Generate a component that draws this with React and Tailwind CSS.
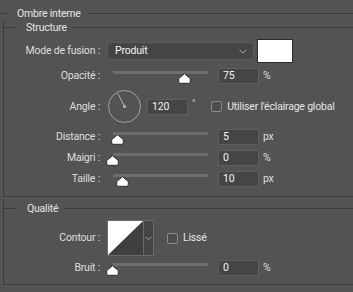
import React from 'react';

const LINE = 'bg-[#3a3a3a]';

const Header = ({ label, lead, padL, padR, className = '' }) => (
  <div className={`flex items-center h-[15px] ${className}`}>
    <div className={`h-px ${LINE} ${lead}`} />
    <span className={`${padL} ${padR} leading-[15px] text-[#e4e4e4] whitespace-nowrap`}>{label}</span>
    <div className={`h-px flex-1 ${LINE}`} />
  </div>
);

const Label = ({ children }) => (
  <div className="w-[96px] shrink-0 text-right text-[#dedede] whitespace-nowrap">{children}</div>
);

const Field = ({ value, w = 'w-[41px]' }) => (
  <div className={`${w} h-[16px] shrink-0 bg-[#454545] border border-[#5e5e5e] pl-[4px] text-[#f4f4f4] leading-[14px]`}>
    {value}
  </div>
);

const Thumb = () => (
  <svg width="13" height="11" viewBox="0 0 13 11" className="block">
    <path
      d="M6.5 0.7 L12.3 5.6 L12.3 8.8 Q12.3 10.3 10.8 10.3 L2.2 10.3 Q0.7 10.3 0.7 8.8 L0.7 5.6 Z"
      fill="#ffffff"
      stroke="#2b2b2b"
      strokeWidth="1"
    />
  </svg>
);

// thumb x is the pixel centre along the 95px track
const Slider = ({ at }) => (
  <div className="relative w-[111px] h-[16px] shrink-0">
    <div className="absolute left-[6px] top-[3px] w-[95px] h-[3px] bg-[#6e6e6e]" />
    <div className="absolute top-[5px]" style={{ left: at - 6.5 + 6 }}>
      <Thumb />
    </div>
  </div>
);

const SliderRow = ({ label, at, value, unit, className = '' }) => (
  <div className={`flex items-center h-[16px] ${className}`}>
    <Label>{label}</Label>
    <div className="w-[7px] shrink-0" />
    <Slider at={at} />
    <Field value={value} />
    <span className="ml-[4px] text-[#dedede]">{unit}</span>
  </div>
);

const Checkbox = () => (
  <div className="w-[11px] h-[11px] shrink-0 rounded-[2px] border border-[#8a8a8a] bg-[#4d4d4d]" />
);

const Dial = () => (
  <svg width="35" height="35" viewBox="0 0 35 35" className="block shrink-0">
    <circle cx="17.5" cy="17.5" r="16" fill="none" stroke="#a2a2a2" strokeWidth="1" />
    <line x1="17.5" y1="17.5" x2="10.8" y2="4.4" stroke="#b4b4b4" strokeWidth="1" />
    <circle cx="17.5" cy="17.5" r="1.6" fill="#b4b4b4" />
  </svg>
);

const ContourPicker = () => (
  <div className="flex w-[47px] h-[36px] shrink-0 border border-[#6a6a6a] bg-[#454545]">
    <svg width="35" height="34" viewBox="0 0 35 34" className="block">
      <rect width="35" height="34" fill="#3f3f3f" />
      <polygon points="0,0 35,0 0,34" fill="#ffffff" />
    </svg>
    <div className="flex-1 flex items-center justify-center border-l border-[#6a6a6a]">
      <svg width="7" height="5" viewBox="0 0 7 5">
        <path d="M0.5 0.8 L3.5 3.8 L6.5 0.8" fill="none" stroke="#a8a8a8" strokeWidth="1" />
      </svg>
    </div>
  </div>
);

export default function App() {
  return (
    <div
      className="w-[353px] h-[292px] overflow-hidden bg-[#535353] text-[10.5px] tracking-[-0.2px] text-[#dedede]"
      style={{ fontFamily: 'Roboto, "Noto Sans", sans-serif' }}
    >
      <Header label="Ombre interne" lead="w-[7px]" padL="pl-[10px]" padR="pr-[7px]" className="mt-[6px]" />

      {/* Structure */}
      <div className="ml-[3px] mt-[6px] border-l border-b border-[#3a3a3a] pb-[9px]">
        <Header label="Structure" lead="w-[13px]" padL="pl-[9px]" padR="pr-[6px]" className="-mt-[7px]" />

        <div className="flex items-center h-[24px] mt-[4px]">
          <Label>Mode de fusion :</Label>
          <div className="w-[7px] shrink-0" />
          <div className="flex items-center justify-between w-[147px] h-[18px] shrink-0 rounded-[3px] bg-[#454545] border border-[#5a5a5a] pl-[7px] pr-[6px]">
            <span className="text-[#f4f4f4]">Produit</span>
            <svg width="8" height="5" viewBox="0 0 8 5">
              <path d="M0.5 0.8 L4 4 L7.5 0.8" fill="none" stroke="#a8a8a8" strokeWidth="1" />
            </svg>
          </div>
          <div className="ml-[3px] w-[36px] h-[24px] bg-white border border-[#2b2b2b]" />
        </div>

        <SliderRow label="Opacité :" at={71} value="75" unit="%" className="mt-[5px]" />

        <div className="flex items-center h-[35px] mt-[5px]">
          <Label>Angle :</Label>
          <div className="w-[7px] shrink-0" />
          <Dial />
          <div className="w-[5px] shrink-0" />
          <Field value="120" />
          <span className="ml-[4px] -mt-[6px] text-[#dedede] text-[9px]">°</span>
          <div className="ml-[16px]">
            <Checkbox />
          </div>
          <span className="ml-[5px] text-[#e4e4e4] whitespace-nowrap">Utiliser l'éclairage global</span>
        </div>

        <SliderRow label="Distance :" at={4} value="5" unit="px" className="mt-[5px]" />
        <SliderRow label="Maigri :" at={-1} value="0" unit="%" className="mt-[5px]" />
        <SliderRow label="Taille :" at={9} value="10" unit="px" className="mt-[5px]" />
      </div>

      {/* Qualité */}
      <div className="ml-[3px] mt-[11px] border-l border-b border-[#3a3a3a] pb-[8px]">
        <Header label="Qualité" lead="w-[13px]" padL="pl-[10px]" padR="pr-[6px]" className="-mt-[7px]" />

        <div className="flex items-center h-[36px] mt-[4px]">
          <Label>Contour :</Label>
          <div className="w-[7px] shrink-0" />
          <ContourPicker />
          <div className="ml-[13px]">
            <Checkbox />
          </div>
          <span className="ml-[5px] text-[#e4e4e4]">Lissé</span>
        </div>

        <SliderRow label="Bruit :" at={-1} value="0" unit="%" className="mt-[4px]" />
      </div>
    </div>
  );
}
